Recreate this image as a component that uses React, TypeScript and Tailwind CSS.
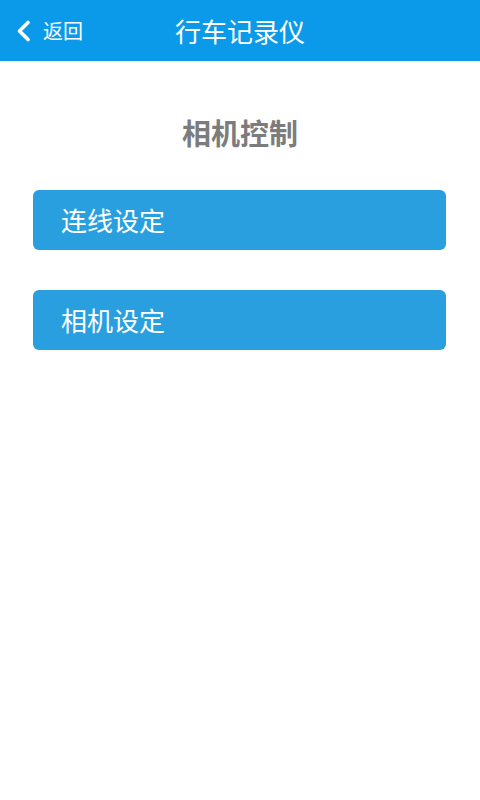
export default function App() {
  const items = ['连线设定', '相机设定']

  return (
    <div
      className="min-h-[800px] w-[480px] bg-white"
      style={{ fontFamily: '"Noto Sans CJK SC", "Noto Sans", sans-serif' }}
    >
      {/* top bar */}
      <div className="relative flex h-[61px] items-center justify-center bg-[#0a9ae9]">
        <div className="absolute left-[15px] top-0 flex h-full items-center">
          <svg width="18" height="22" viewBox="0 0 18 22" fill="none">
            <path d="M13 2.5 L4.5 11 L13 19.5" stroke="white" strokeWidth="3.6" strokeLinecap="round" strokeLinejoin="round" />
          </svg>
          <span className="ml-[10px] text-[20px] leading-none text-white">返回</span>
        </div>
        <span className="text-[26px] leading-none text-white">行车记录仪</span>
      </div>

      <div className="pt-[51px] text-center text-[29px] font-bold leading-[40px] text-[#7c7c7c]">
        相机控制
      </div>

      <div className="mt-[38px] flex flex-col gap-[40px] pl-[33px] pr-[34px]">
        {items.map((label) => (
          <div
            key={label}
            className="flex h-[60px] items-center rounded-[6px] bg-[#2a9fe0] pl-[28px] text-[26px] leading-none text-white"
          >
            {label}
          </div>
        ))}
      </div>
    </div>
  )
}
